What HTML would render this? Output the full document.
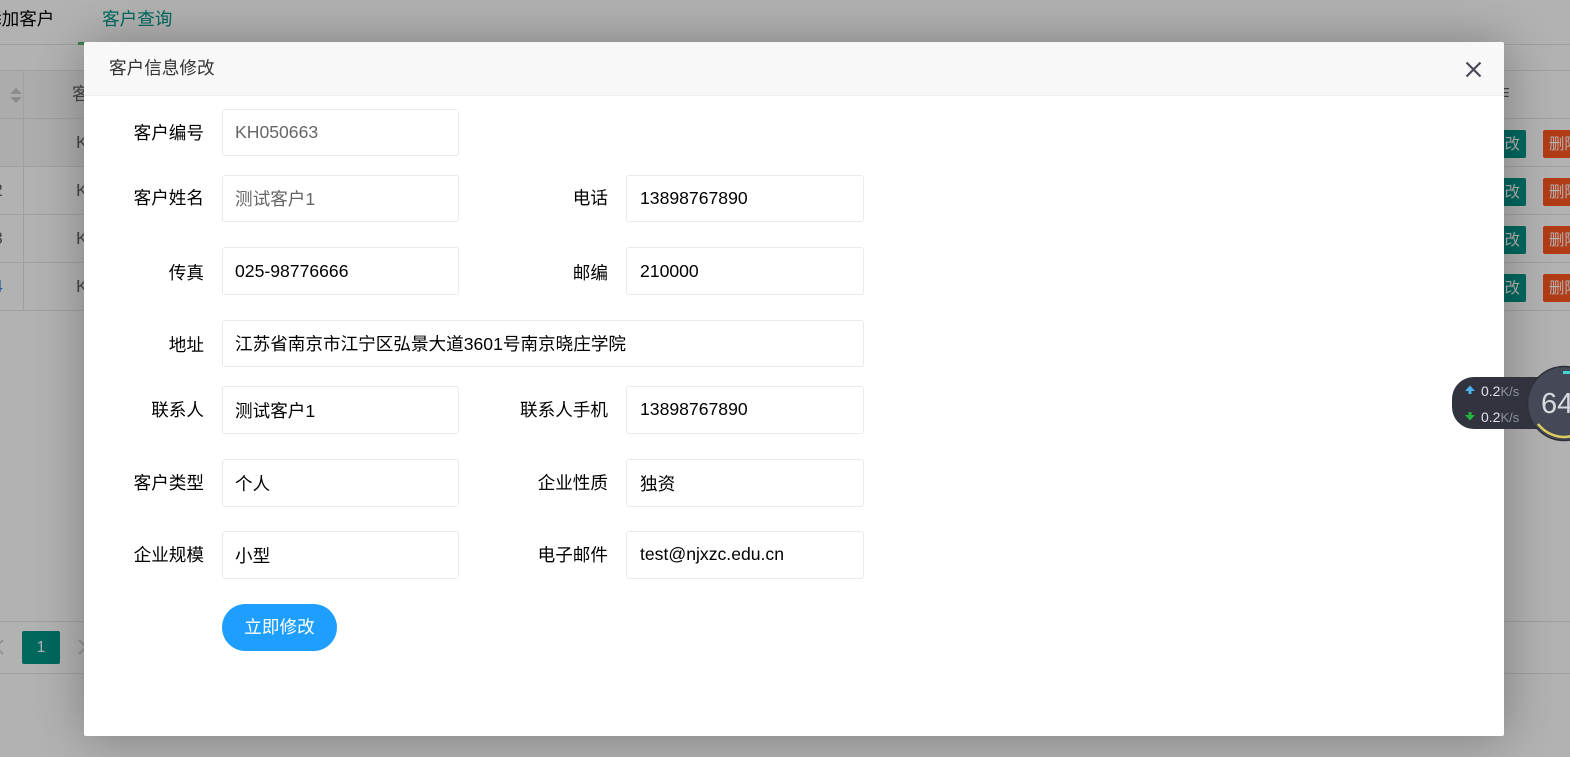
<!DOCTYPE html>
<html lang="zh-CN">
<head>
<meta charset="utf-8">
<title>客户信息修改</title>
<style>
html,body{margin:0;padding:0;width:1570px;height:757px;overflow:hidden;background:#fff}
body{position:relative;font-family:"Liberation Sans","Noto Sans CJK SC",sans-serif;font-size:17.6px;color:#000}
.a{position:absolute;white-space:nowrap}
.ln{position:absolute;background:#e6e6e6}
.t{position:absolute;font-size:17.6px;line-height:22px;color:#666;white-space:nowrap}
.edit{position:absolute;left:1466px;width:60px;height:28px;background:#009688;border-radius:2px;color:#fff;font-size:15.4px;line-height:30px;text-align:right;box-sizing:border-box;padding-right:6px}
.del{position:absolute;left:1543px;width:60px;height:28px;background:#ff5722;border-radius:2px;color:#fff;font-size:15.4px;line-height:30px;box-sizing:border-box;padding-left:6px;overflow:hidden}
#overlay{position:absolute;left:0;top:0;width:1570px;height:757px;background:rgba(0,0,0,.3)}
#modal{position:absolute;left:84px;top:42px;width:1420px;height:694px;background:#fff;border-radius:2px;box-shadow:1px 1px 50px rgba(0,0,0,.3);overflow:hidden}
#head{position:absolute;left:0;top:0;width:1420px;height:53px;background:#f8f8f8;border-bottom:1px solid #eee}
#head span{position:absolute;left:25px;top:14px;font-size:17.6px;line-height:24px;color:#333;white-space:nowrap}
.lb{position:absolute;width:120px;text-align:right;font-size:17.6px;line-height:24px;color:#000;white-space:nowrap;margin-top:2px}
.in{position:absolute;box-sizing:border-box;width:237px;height:47px;border:1px solid #eaeaea;border-radius:3px;background:#fff;padding-left:12px;font-size:17.6px;line-height:47px;color:#000;white-space:nowrap}
.r{left:542px;width:238px;padding-left:13px}
.ro{color:#666}
#btn{position:absolute;left:138px;top:562px;width:115px;height:47px;background:#1e9fff;border-radius:24px;color:#fff;font-size:17.6px;line-height:46px;text-align:center}
#widget{position:absolute;left:1450px;top:360px;width:120px;height:90px;overflow:hidden}
</style>
</head>
<body>
<div class="a" style="left:-16px;top:7px;font-size:17.6px;line-height:24px;color:#000">添加客户</div>
<div class="a" style="left:102px;top:7px;font-size:17.6px;line-height:24px;color:#009688">客户查询</div>
<div class="ln" style="left:0;top:44px;width:1570px;height:1px"></div>
<div class="a" style="left:78px;top:42px;width:120px;height:3px;background:#5fb878"></div>

<div class="ln" style="left:0;top:70px;width:1570px;height:1px"></div>
<div class="ln" style="left:0;top:118px;width:1570px;height:1px"></div>
<div class="ln" style="left:0;top:166px;width:1570px;height:1px"></div>
<div class="ln" style="left:0;top:214px;width:1570px;height:1px"></div>
<div class="ln" style="left:0;top:262px;width:1570px;height:1px"></div>
<div class="ln" style="left:0;top:310px;width:1570px;height:1px"></div>
<div class="ln" style="left:23px;top:70px;width:1px;height:240px"></div>
<div class="a" style="left:0;top:71px;width:84px;height:47px;background:#f6f6f6"></div>
<div class="a" style="left:0;top:119px;width:84px;height:47px;background:#f8f8f8"></div>
<div class="ln" style="left:23px;top:70px;width:1px;height:96px"></div>

<svg class="a" style="left:9px;top:87px" width="14" height="17" viewBox="0 0 14 17"><path d="M1 7L7 1L13 7Z" fill="#c8c8c8"/><path d="M1 10L7 16L13 10Z" fill="#c8c8c8"/></svg>
<div class="t" style="left:72px;top:83px">客户</div>
<div class="t" style="left:76px;top:131px">KH</div>
<div class="t" style="left:76px;top:179px">KH</div>
<div class="t" style="left:76px;top:227px">KH</div>
<div class="t" style="left:76px;top:275px">KH</div>
<div class="t" style="left:-7px;top:179px">2</div>
<div class="t" style="left:-7px;top:227px">3</div>
<div class="t" style="left:-7px;top:275px;color:#2b7de0">4</div>
<div class="t" style="left:1492px;top:83px">作</div>

<div class="edit" style="top:130px">修改</div><div class="del" style="top:130px">删除</div>
<div class="edit" style="top:178px">修改</div><div class="del" style="top:178px">删除</div>
<div class="edit" style="top:226px">修改</div><div class="del" style="top:226px">删除</div>
<div class="edit" style="top:274px">修改</div><div class="del" style="top:274px">删除</div>

<div class="ln" style="left:0;top:621px;width:1570px;height:1px"></div>
<div class="ln" style="left:0;top:673px;width:1570px;height:1px"></div>
<svg class="a" style="left:-6px;top:638px" width="12" height="18" viewBox="0 0 12 18"><path d="M9 2L2 9L9 16" fill="none" stroke="#d2d2d2" stroke-width="2"/></svg>
<div class="a" style="left:22px;top:631px;width:38px;height:33px;background:#009688;border-radius:2px;color:#fff;font-size:15.4px;line-height:33px;text-align:center">1</div>
<svg class="a" style="left:77px;top:638px" width="12" height="18" viewBox="0 0 12 18"><path d="M2 2L9 9L2 16" fill="none" stroke="#d2d2d2" stroke-width="2"/></svg>

<div id="overlay"></div>

<div id="modal">
  <div id="head"><span>客户信息修改</span>
    <svg style="position:absolute;left:1380.500px;top:19px" width="17" height="17" viewBox="0 0 17 17"><path d="M1.500 1.500L15.500 15.500M15.500 1.500L1.500 15.500" stroke="#4a4a55" stroke-width="2.200" fill="none"/></svg>
  </div>

  <div class="lb" style="left:0;top:77px">客户编号</div>
  <div class="in ro" style="left:138px;top:67px;line-height:45px">KH050663</div>

  <div class="lb" style="left:0;top:142px">客户姓名</div>
  <div class="in ro" style="left:138px;top:133px;line-height:47px">测试客户1</div>
  <div class="lb" style="left:404px;top:142px">电话</div>
  <div class="in r" style="top:133px;line-height:45px">13898767890</div>

  <div class="lb" style="left:0;top:217px">传真</div>
  <div class="in" style="left:138px;top:205px;height:48px">025-98776666</div>
  <div class="lb" style="left:404px;top:217px">邮编</div>
  <div class="in r" style="top:205px;height:48px">210000</div>

  <div class="lb" style="left:0;top:289px">地址</div>
  <div class="in" style="left:138px;top:278px;width:642px">江苏省南京市江宁区弘景大道3601号南京晓庄学院</div>

  <div class="lb" style="left:0;top:354px">联系人</div>
  <div class="in" style="left:138px;top:344px;height:48px;line-height:48px">测试客户1</div>
  <div class="lb" style="left:404px;top:354px">联系人手机</div>
  <div class="in r" style="top:344px;height:48px;line-height:45px">13898767890</div>

  <div class="lb" style="left:0;top:427px">客户类型</div>
  <div class="in" style="left:138px;top:417px;height:48px;line-height:49px">个人</div>
  <div class="lb" style="left:404px;top:427px">企业性质</div>
  <div class="in r" style="top:417px;height:48px;line-height:49px">独资</div>

  <div class="lb" style="left:0;top:499px">企业规模</div>
  <div class="in" style="left:138px;top:489px;height:48px;line-height:49px">小型</div>
  <div class="lb" style="left:404px;top:499px">电子邮件</div>
  <div class="in r" style="top:489px;height:48px;line-height:45px">test@njxzc.edu.cn</div>

  <div id="btn">立即修改</div>
</div>

<div id="widget">
  <svg width="120" height="90" viewBox="1450 360 120 90" style="position:absolute;left:0;top:0">
    <rect x="1452" y="377" width="130" height="52" rx="22" ry="22" fill="#31343f"/>
    <path d="M1465 391L1470 385.500L1475 391H1471.500V394H1468.500V391Z" fill="#4bb4ea"/>
    <path d="M1465 415L1470 420.500L1475 415H1471.500V412H1468.500V415Z" fill="#22b53c"/>
    <text x="1481" y="396" font-family="Liberation Sans, sans-serif" font-size="14" fill="#dfe1e6">0.2<tspan font-size="13" fill="#8d909a">K/s</tspan></text>
    <text x="1481" y="422" font-family="Liberation Sans, sans-serif" font-size="14" fill="#dfe1e6">0.2<tspan font-size="13" fill="#8d909a">K/s</tspan></text>
    <circle cx="1564.500" cy="403.500" r="37" fill="#454957" stroke="#2e3039" stroke-width="1.500"/>
    <rect x="1563" y="371" width="7" height="3" fill="#3fd6d0"/>
    <path d="M1538 424A33 33 0 0 0 1572 436" fill="none" stroke="#dccb5e" stroke-width="2.500"/>
    <text x="1541" y="413" font-family="Liberation Sans, sans-serif" font-size="29" fill="#d8dae0">64</text>
  </svg>
</div>
</body>
</html>
